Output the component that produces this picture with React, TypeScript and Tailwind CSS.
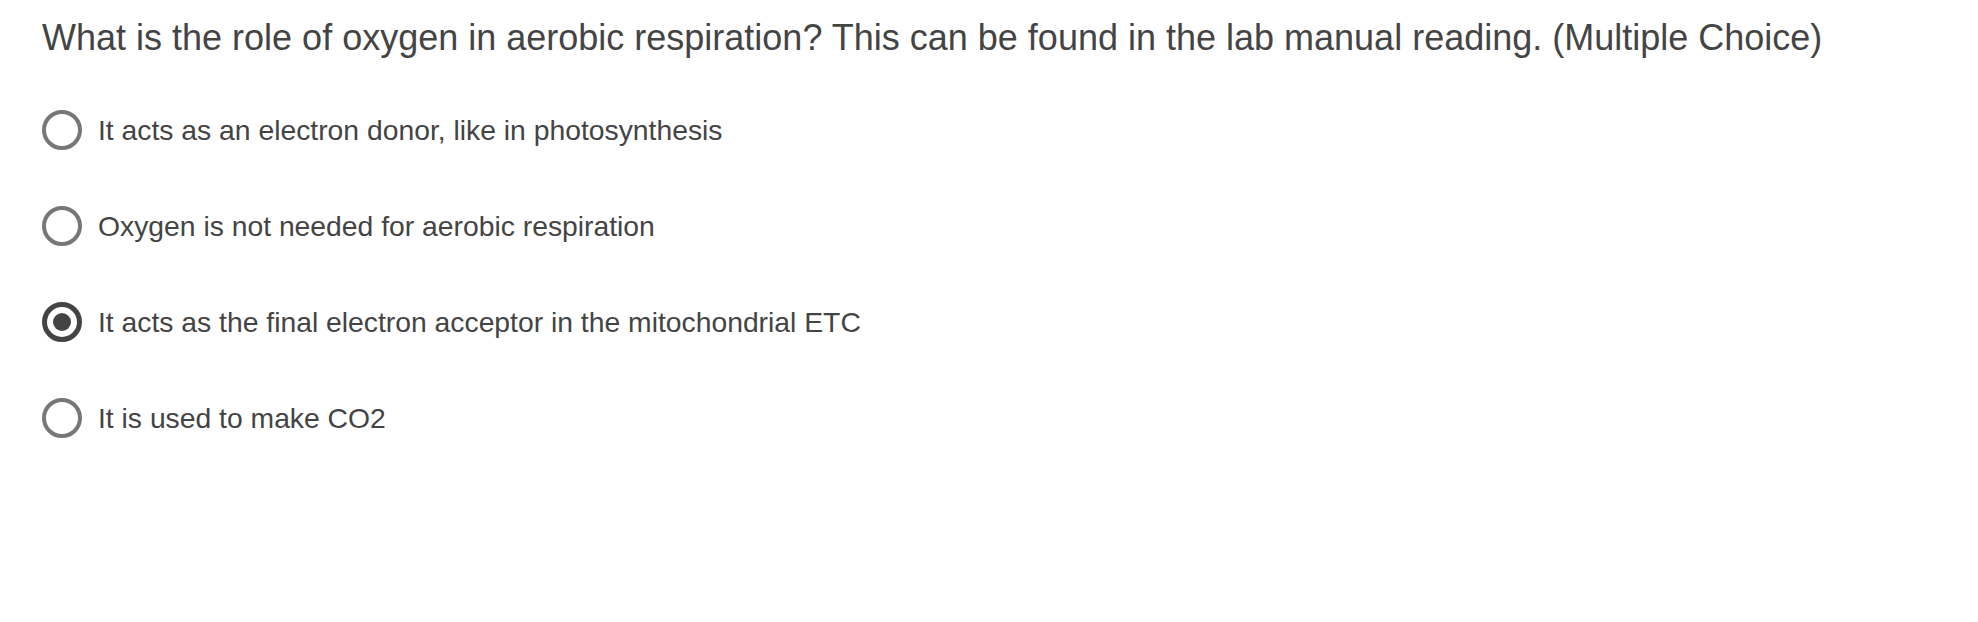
import { useState } from "react";

const OPTIONS = [
  "It acts as an electron donor, like in photosynthesis",
  "Oxygen is not needed for aerobic respiration",
  "It acts as the final electron acceptor in the mitochondrial ETC",
  "It is used to make CO2",
];

export default function App() {
  const [picked, setPicked] = useState(2);

  return (
    <div className="min-h-screen bg-white px-[42px] pt-[17px] text-[#444444] font-['Liberation_Sans',Arial,sans-serif]">
      <h1 className="text-[36px] leading-[41px] font-normal">
        What is the role of oxygen in aerobic respiration? This can be found in the lab manual reading. (Multiple Choice)
      </h1>

      <div className="mt-[52px] flex flex-col gap-[56px]">
        {OPTIONS.map((label, i) => {
          const on = picked === i;
          return (
            <label key={label} onClick={() => setPicked(i)} className="flex h-10 items-center gap-4 cursor-pointer">
              {on ? (
                <span className="flex h-10 w-10 shrink-0 items-center justify-center rounded-full border-[5px] border-[#444444]">
                  <span className="h-[18px] w-[18px] rounded-full bg-[#444444]" />
                </span>
              ) : (
                <span className="h-10 w-10 shrink-0 rounded-full border-4 border-[#777777]" />
              )}
              <span className="text-[28.3px] leading-10">{label}</span>
            </label>
          );
        })}
      </div>
    </div>
  );
}
